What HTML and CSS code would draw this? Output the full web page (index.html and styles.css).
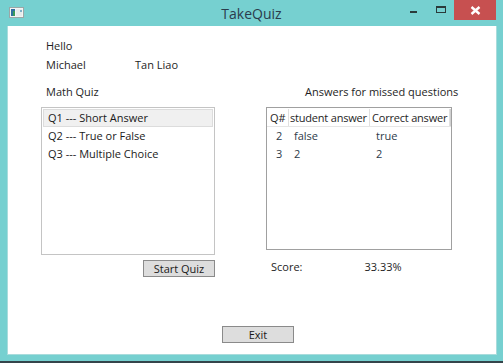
FILE: index.html
```html
<!DOCTYPE html>
<html>
<head>
<meta charset="utf-8">
<link rel="stylesheet" href="styles.css">
</head>
<body>
<div class="window">
  <div class="titlebar">
    <svg class="app-icon" width="15" height="11" viewBox="0 0 15 11">
      <rect x="0.5" y="0.5" width="14" height="10" fill="#f4f4f4" stroke="#9aa7a7"/>
      <rect x="2" y="2" width="4" height="7" fill="#2f6f9f"/>
      <rect x="4" y="4" width="2" height="5" fill="#3a9a5a"/>
      <rect x="7" y="2" width="6" height="7" fill="#e6ecec"/>
      <rect x="11" y="3" width="2" height="2" fill="#7fb0c8"/>
    </svg>
    <div class="title">TakeQuiz</div>
    <div class="controls">
      <div class="ctl min"><span class="min-bar"></span></div>
      <div class="ctl max"><span class="max-box"></span></div>
      <div class="ctl close">
        <svg width="11" height="9" viewBox="0 0 11 9"><path d="M1.5 1 L9.5 8 M9.5 1 L1.5 8" stroke="#fff" stroke-width="2.4" stroke-linecap="butt"/></svg>
      </div>
    </div>
  </div>
  <div class="client">
    <div class="row r1"><span class="lbl">Hello</span></div>
    <div class="row r2"><span class="lbl first">Michael</span><span class="lbl">Tan Liao</span></div>
    <div class="cols">
      <div class="col left">
        <div class="row head"><span class="lbl">Math Quiz</span></div>
        <div class="listbox">
          <div class="item selected">Q1 --- Short Answer</div>
          <div class="item">Q2 --- True or False</div>
          <div class="item">Q3 --- Multiple Choice</div>
        </div>
        <div class="btnrow"><div class="btn start">Start Quiz</div></div>
      </div>
      <div class="col right">
        <div class="row head"><span class="lbl answers">Answers for missed questions</span></div>
        <div class="grid">
          <div class="grow hdr">
            <div class="c c1">Q#</div>
            <div class="c c2">student answer</div>
            <div class="c c3">Correct answer</div>
            <div class="c c4"></div>
          </div>
          <div class="grow data">
            <div class="c c1">2</div>
            <div class="c c2">false</div>
            <div class="c c3">true</div>
          </div>
          <div class="grow data">
            <div class="c c1">3</div>
            <div class="c c2">2</div>
            <div class="c c3">2</div>
          </div>
        </div>
        <div class="score"><span class="score-lbl">Score:</span><span class="score-val">33.33%</span></div>
      </div>
    </div>
    <div class="exitrow"><div class="btn exit">Exit</div></div>
  </div>
  <div class="bottomline"></div>
</div>
</body>
</html>
```
FILE: styles.css
```css
* { box-sizing: border-box; }
html, body { margin: 0; padding: 0; }
body {
  width: 503px;
  height: 363px;
  overflow: hidden;
  font-family: "Open Sans", "Noto Sans", sans-serif;
  font-size: 11px;
  color: #1e1e1e;
  white-space: nowrap;
}
.window {
  width: 503px;
  height: 363px;
  background: #76d0d0;
  display: flex;
  flex-direction: column;
}
.titlebar {
  height: 26px;
  display: flex;
  align-items: flex-start;
  position: relative;
}
.app-icon {
  margin: 7px 0 0 9px;
}
.title {
  position: absolute;
  left: 0;
  right: 0;
  top: 4px;
  text-align: center;
  font-size: 14px;
  color: #2b3c4c;
  pointer-events: none;
}
.controls {
  margin-left: auto;
  display: flex;
  margin-right: 7px;
}
.ctl {
  height: 20px;
  display: flex;
  align-items: center;
  justify-content: center;
}
.min { width: 24px; }
.min-bar {
  display: block;
  width: 7px;
  height: 2px;
  background: #2a3a3a;
  margin-top: 4px;
  margin-right: 8px;
}
.max { width: 24px; margin-right: 1px; }
.max-box {
  display: block;
  width: 10px;
  height: 7px;
  border: 1px solid #2a3a3a;
  border-top-width: 2px;
  margin-top: -2px;
}
.close {
  width: 42px;
  background: #c75050;
}
.client {
  margin: 0 6px 0 7px;
  height: 329px;
  background: #fff;
  border: 1px solid #a9dcdc;
  border-top: none;
  padding: 12px 0 0 33px;
  display: flex;
  flex-direction: column;
}
.row {
  height: 16px;
  line-height: 16px;
  display: flex;
}
.lbl { margin-left: 5px; }
.r2 { margin-top: 3px; }
.r2 .first { width: 84px; }
.cols {
  display: flex;
  margin-top: 11px;
}
.col { display: flex; flex-direction: column; }
.left { width: 174px; }
.right { width: 186px; margin-left: 51px; }
.head { margin-bottom: 7px; }
.answers { margin-left: 39px; }
.listbox {
  height: 148px;
  border: 1px solid #c4c4c4;
  padding: 1px;
}
.item {
  height: 18px;
  line-height: 16px;
  padding-left: 4px;
  border: 1px solid transparent;
  color: #1a1a1a;
}
.item.selected {
  background: #f0f0f0;
  border-color: #dcdcdc;
}
.btnrow {
  display: flex;
  justify-content: flex-end;
  margin-top: 5px;
}
.btn {
  height: 17px;
  width: 72px;
  border: 1px solid #8a8a8a;
  background: #dddddd;
  text-align: center;
  line-height: 15px;
  color: #1a1a1a;
}
.grid {
  height: 143px;
  border: 1px solid #a0a0a0;
  padding: 1px 0 0 0;
}
.grow {
  display: flex;
  height: 18px;
  line-height: 17px;
}
.c { overflow: hidden; }
.hdr { border-bottom: 1px solid #e6e6e6; }
.hdr .c { border-right: 1px solid #e0e0e0; }
.hdr .c4 { border-right: none; border-left: 1px solid #d0d0d0; flex: 1; }
.c1 { width: 22px; }
.c2 { width: 81px; }
.c3 { width: 80px; }
.hdr .c1 { padding-left: 3px; }
.hdr .c2 { padding-left: 1px; letter-spacing: -0.2px; }
.hdr .c3 { padding-left: 2px; letter-spacing: -0.2px; }
.data { color: #2e3b4a; }
.data .c1 { padding-left: 9px; }
.data .c2 { padding-left: 5px; }
.data .c3 { padding-left: 6px; }
.score {
  margin-top: 9px;
  height: 16px;
  line-height: 16px;
  display: flex;
  padding-left: 5px;
}
.score-val { margin-left: 62px; }
.exitrow {
  margin-top: 49px;
  padding-left: 181px;
}
.exit { width: 72px; }
.bottomline {
  margin-top: auto;
  height: 2px;
  background: #34444a;
}
```
